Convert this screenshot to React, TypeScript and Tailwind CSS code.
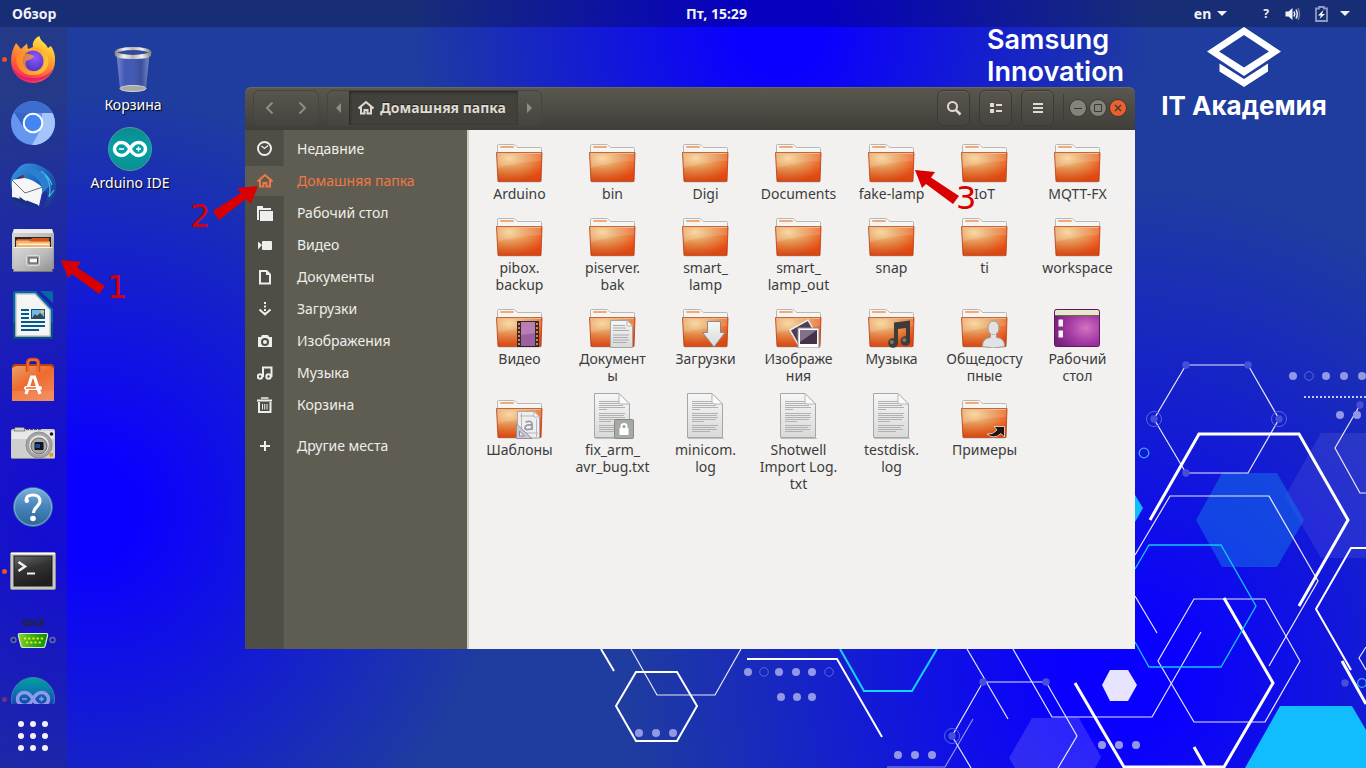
import type { ReactNode } from "react";

/* ---------- shared gradients ---------- */

function Stops({ colors }: { colors: string[] }) {
  return (
    <>
      {colors.map((color, i) => (
        <stop key={i} offset={i / (colors.length - 1)} stopColor={color} />
      ))}
    </>
  );
}

function SharedDefs() {
  return (
    <svg className="absolute size-0" aria-hidden="true">
      <defs>
        <radialGradient id="folder" cx="0.28" cy="0.2" r="0.85">
          <Stops colors={["#f8d294", "#eaa867", "#e9803f", "#f04e14"]} />
        </radialGradient>
        <linearGradient id="folderShade" x1="0" y1="0" x2="0" y2="1">
          <stop offset="0.4" stopColor="#c8501c" stopOpacity="0" />
          <stop offset="1" stopColor="#c43c0c" stopOpacity="0.5" />
        </linearGradient>
        <linearGradient id="paper" x1="0" y1="0" x2="0" y2="1">
          <Stops colors={["#f6f6f6", "#d9d9d9"]} />
        </linearGradient>
        <linearGradient id="steel" x1="0" y1="0" x2="1" y2="1">
          <Stops colors={["#d8d8d8", "#bdbdbd", "#8f8f8f"]} />
        </linearGradient>
        <radialGradient id="purple" cx="0.7" cy="0.5" r="0.75">
          <Stops colors={["#d273c0", "#a63ba5", "#742079"]} />
        </radialGradient>
        <linearGradient id="fire" x1="0.8" y1="0" x2="0.3" y2="1">
          <Stops colors={["#fff44f", "#ffb02e", "#ff6a35", "#f5205c"]} />
        </linearGradient>
        <linearGradient id="fireTail" x1="0" y1="0" x2="1" y2="0.6">
          <Stops colors={["#ff8a16", "#ffa02b", "#ffd53d"]} />
        </linearGradient>
        <radialGradient id="globe" cx="0.6" cy="0.35" r="0.7">
          <Stops colors={["#9059ff", "#6a45e0", "#4b2fb0"]} />
        </radialGradient>
        <linearGradient id="bird" x1="0" y1="0" x2="1" y2="1">
          <Stops colors={["#3a9be8", "#1c62b8", "#1d2d7c"]} />
        </linearGradient>
        <linearGradient id="bag" x1="0" y1="0" x2="0.7" y2="1">
          <Stops colors={["#e9a06a", "#ee6b2c", "#f0855a"]} />
        </linearGradient>
        <linearGradient id="help" x1="0" y1="0" x2="0" y2="1">
          <Stops colors={["#7fb0df", "#4583bb", "#2e6693"]} />
        </linearGradient>
        <linearGradient id="screen" x1="0" y1="0" x2="0.4" y2="1">
          <Stops colors={["#6a6a6a", "#333333", "#1f1f1f"]} />
        </linearGradient>
        <linearGradient id="serial" x1="0" y1="0" x2="1" y2="0">
          <Stops colors={["#86d52a", "#2fae17", "#0b8f05"]} />
        </linearGradient>
        <linearGradient id="teal" x1="0" y1="0" x2="0" y2="1">
          <Stops colors={["#0e8a8c", "#00a3a6", "#0e8d90"]} />
        </linearGradient>
        <linearGradient id="tealFade" x1="0" y1="0" x2="0" y2="1">
          <Stops colors={["#02a29c", "#0a76b0", "#183cb4", "#1a2ab8"]} />
        </linearGradient>
        <linearGradient id="binGlass" x1="0" y1="0" x2="1" y2="0">
          <Stops colors={["#7486cf", "#4259b4", "#455cb6", "#3a4f9c", "#7688c6"]} />
        </linearGradient>
        <linearGradient id="rim" x1="0" y1="0" x2="1" y2="0">
          <Stops colors={["#8b8b88", "#f2f2f0", "#b5b5b0", "#f4f4f2", "#858582"]} />
        </linearGradient>
      </defs>
    </svg>
  );
}

/* ---------- wallpaper ---------- */

const DOTS = [
  [1293, 376], [1326, 376], [1344, 376], [1362, 376], [1340, 415], [1357, 415],
  [1102, 745], [1119, 745], [1136, 745], [639, 733], [656, 733], [673, 733],
  [748, 672], [779, 672], [796, 672], [812, 672], [781, 697], [797, 697], [812, 697],
  [898, 755], [915, 755], [932, 755],
];

const FAINT_DOTS = [
  [1186, 365], [1248, 365], [1154, 419], [1279, 419], [1186, 473],
  [1360, 405], [1345, 683], [983, 682], [1046, 682], [952, 736],
];

function Wallpaper() {
  return (
    <svg
      className="absolute inset-0 h-full w-full"
      viewBox="0 0 1366 768"
      preserveAspectRatio="xMidYMid slice"
      aria-hidden="true"
    >
      <defs>
        {[
          { id: "glowLeft", cx: 90, cy: 510, r: 420 },
          { id: "glowTop", cx: 780, cy: 30, r: 370 },
          { id: "glowRight", cx: 1120, cy: 680, r: 500 },
        ].map(({ id, cx, cy, r }) => (
          <radialGradient key={id} id={id} gradientUnits="userSpaceOnUse" cx={cx} cy={cy} r={r}>
            <stop offset="0" stopColor="#0a00ff" />
            <stop offset="0.12" stopColor="#0a00ff" />
            <stop offset="1" stopColor="#0a00ff" stopOpacity="0" />
          </radialGradient>
        ))}
      </defs>
      <rect width="1366" height="768" fill="#1f3d9e" />
      <rect width="1366" height="768" fill="url(#glowLeft)" />
      <rect width="1366" height="768" fill="url(#glowTop)" />
      <rect width="1366" height="768" fill="url(#glowRight)" />

      <path d="M1321 433H1366V558H1321L1285 496Z" fill="#ffffff" opacity="0.08" />
      <path d="M1222 473H1277L1304 520L1277 567H1222L1196 520Z" fill="#1576e8" opacity="0.5" />
      <path d="M1032 718H1079L1101 757L1095 768H1015L1009 758Z" fill="#ffffff" opacity="0.14" />
      <path d="M1280 706H1352L1366 730V768H1245Z" fill="#12bdff" />
      <path d="M1120 495H1135L1143 508L1135 522H1120Z" fill="#12bdff" />
      <path d="M1110 670H1128L1137 685L1128 701H1110L1102 685Z" fill="#e6e4ff" />

      <g fill="none" stroke="#ffffff" strokeWidth="1.2" opacity="0.9">
        <path d="M1186 365H1248L1279 419L1248 473H1186L1154 419Z" />
        <path d="M1360 405L1335 448L1360 493H1366" />
        <path d="M1135 555L1170 496H1269L1318 581L1269 666" />
        <path d="M1194 599H1265L1300 661L1265 722H1194L1158 661Z" />
        <path d="M1135 596L1157 633" />
        <path d="M1201 632L1152 717H1052L1013 649" />
        <path d="M1366 647L1359 658L1366 670" />
        <path d="M631 649L657 695H715L741 649" />
        <path d="M971 768L952 736L983 682H1046L1077 736L1058 768" />
        <path d="M967 649L1008 719" />
        <path d="M973 719L945 767H887" opacity="0.6" />
      </g>
      <g fill="none" stroke="#ffffff" strokeWidth="2">
        <path d="M1366 548H1351L1316 609L1351 670" />
        <path d="M601 649L614 671" />
        <path d="M636 672H677L697 706L677 741H636L616 706Z" />
        <path d="M747 659H837L882 737" />
      </g>
      <g fill="none" stroke="#ffffff" strokeWidth="3">
        <path d="M1150 520L1199 434H1299L1348 520L1299 606" />
        <path d="M1224 598L1273 683L1224 767H1124L1075 683" />
        <path d="M1194 747L1206 768" />
        <path d="M1342 661L1366 704" />
      </g>
      <path d="M840 649L864 691H912L937 649" fill="none" stroke="#16d3ff" strokeWidth="2" />
      <path
        d="M1135 569L1149 545H1221L1256 606L1221 667H1149L1135 642"
        fill="none"
        stroke="#13c8f5"
        strokeWidth="1.3"
      />
      <path d="M1304 397H1366" stroke="#c6caf0" strokeWidth="2" strokeDasharray="2 2" />

      {DOTS.map(([x, y]) => (
        <circle key={`${x}-${y}`} cx={x} cy={y} r="4" fill="#9398e6" />
      ))}
      {FAINT_DOTS.map(([x, y]) => (
        <circle key={`${x}-${y}`} cx={x} cy={y} r="3.7" fill="#474fd8" />
      ))}
      <g fill="none" stroke="#5c63dc" strokeWidth="1">
        <circle cx="1154" cy="419" r="7.5" />
        <circle cx="1279" cy="419" r="7.5" />
        <circle cx="952" cy="736" r="7.5" />
        <circle cx="1309" cy="376" r="4.3" />
        <circle cx="764" cy="672" r="4.3" />
        <circle cx="829" cy="672" r="4.3" />
      </g>
      <g fill="none" stroke="#38a9f5" strokeWidth="1.3">
        <circle cx="1144" cy="453" r="4.8" />
        <circle cx="1362" cy="683" r="4.3" />
      </g>
    </svg>
  );
}

function Branding() {
  return (
    <div className="font-['Inter',sans-serif] text-white">
      <p className="absolute top-[24px] left-[987px] text-[27px] leading-8 font-semibold">
        Samsung
        <br />
        Innovation
      </p>
      <div className="absolute top-[27px] left-[1160px] flex w-[168px] flex-col items-center">
        <svg width="74" height="60" viewBox="0 0 74 60" fill="#ffffff" aria-hidden="true">
          <path
            fillRule="evenodd"
            d="M37 0L74 24.5L37 49L0 24.5ZM37 8L12 24.5L37 40.5L62 24.5Z"
          />
          <path d="M12.5 36.5L37 52L61 36.5V44.5L37 60L12.5 44.5Z" />
        </svg>
        <p className="mt-[3px] text-[26px] leading-8 font-bold whitespace-nowrap">IT Академия</p>
      </div>
    </div>
  );
}

/* ---------- launcher icons ---------- */

function FirefoxIcon() {
  return (
    <svg width="46" height="48" viewBox="0 0 46 48">
      <path
        d="M6 8L11 14L17 8.500L18 14L23 12C22 7 25 3 29.500 1C30 6 35 7 38 13L41 11C44 16 45.500 20 45 26A22 22 0 0 1 1 26C1 19 3 13 6 8Z"
        fill="url(#fire)"
      />
      <circle cx="23" cy="26" r="10.500" fill="url(#globe)" />
      <path
        d="M7 20C13 17 20 19 24 21C23 24 19 25 16 26C14 31 18 36 24 36C32 36 36 29 33 22C30 14 23 13 19 14C26 11 33 13 37 20C41 29 36 40 24 40C12 41 4 31 7 20Z"
        fill="url(#fireTail)"
        opacity="0.75"
      />
      <path
        d="M2 32C6 42 15 46 24 46C33 46 41 41 44 32C40 39 33 43 24 43C15 43 7 40 2 32Z"
        fill="#e2147a"
        opacity="0.75"
      />
    </svg>
  );
}

function ChromiumIcon() {
  return (
    <svg width="46" height="46" viewBox="0 0 46 46">
      <circle cx="23" cy="23" r="22" fill="#6496f0" />
      <path d="M4 12A22 22 0 0 1 42.500 13H23L13 24Z" fill="#3d6dcf" />
      <path d="M4 12L14 28L20 14Z" fill="#3564c4" />
      <path d="M42.500 13A22 22 0 0 1 22 45L32 27V13Z" fill="#a4c4fb" />
      <circle cx="23" cy="23" r="10.300" fill="#ffffff" />
      <circle cx="23" cy="23" r="8.300" fill="#4285f4" />
    </svg>
  );
}

function ThunderbirdIcon() {
  return (
    <svg width="48" height="48" viewBox="0 0 48 48">
      <path
        d="M13 2C20 -1 30 1 37 6C44 10 48 17 47 26C47 35 41 43 33 46C37 41 39 36 38 29L12 13C8 14 3 19 3 27C0 20 2 12 7 8C9 5 11 3 13 2Z"
        fill="url(#bird)"
      />
      <path d="M3 26C4 36 10 42 20 46C13 45 5 41 2 34Z" fill="#1b3a94" />
      <path d="M3 17L15 15C22 16 29 20 34 25L30 43L12 36L3 34Z" fill="#f6f6f8" />
      <path d="M3 17L16 30L34 24" fill="none" stroke="#6d7078" strokeWidth="1" />
      <path d="M13 12C17 9 22 10 26 14C31 18 34 23 33 31L41 22C39 12 29 4 19 5Z" fill="#2b7fd0" />
      <path d="M36 12C41 18 42 26 40 34L45 27M32 8C38 12 41 16 43 22" fill="none" stroke="#48b7ee" strokeWidth="1.200" />
      <circle cx="13.500" cy="13.500" r="1.700" fill="#7a3a24" />
      <path d="M4 35L8 39L6 35L13 40L12 36L20 42L19 39L29 43" fill="none" stroke="#183078" strokeWidth="2" />
    </svg>
  );
}

function FilesIcon() {
  return (
    <svg width="44" height="46" viewBox="0 0 44 46">
      <path d="M3 1H41L43 6V41H1V6Z" fill="url(#steel)" />
      <path d="M3 1H41L42 5H2Z" fill="#ebebeb" />
      <rect x="4" y="9" width="36" height="11" fill="#2d2723" />
      <path d="M6 11H20L21 10H38V20H6Z" fill="#d4541c" />
      <path d="M5 12.500H18L19 13.500H39V20H5Z" fill="#f4b26b" />
      <path d="M7 15.500H38V17H7Z" fill="#fff2dc" />
      <path d="M2.500 19H41.500V44H2.500Z" fill="url(#steel)" />
      <path d="M2.500 19.500H41.500" stroke="#f4f4f4" />
      <path d="M3 43.500H41" stroke="#777777" />
      <rect x="15.500" y="27.500" width="13" height="10" rx="1.500" fill="#aaaaaa" stroke="#dcdcdc" />
      <rect x="18" y="30" width="8.500" height="5" fill="#f5f5f5" stroke="#474747" />
    </svg>
  );
}

function WriterIcon() {
  return (
    <svg width="42" height="48" viewBox="0 0 42 48">
      <path d="M3 0H24L41 18V46Q41 48 39 48H3Q1 48 1 46V2Q1 0 3 0Z" fill="#0369a3" />
      <path d="M1 32H41V46Q41 48 39 48H3Q1 48 1 46Z" fill="#054f7c" />
      <path d="M28 0H39Q41 0 41 2V12Z" fill="#0369a3" />
      <path d="M4 3H23L38 19V45H4Z" fill="#f5f5f5" stroke="#c8c8c8" strokeWidth="1.500" />
      <path d="M9 19H17M9 23H17M9 27H17M9 31H33M9 35H33M9 39H27" stroke="#055a8c" strokeWidth="2" />
      <rect x="19.500" y="18.500" width="13" height="9" fill="#70b9e6" stroke="#0a5482" />
      <path d="M20 27L23 23L25 25L28 22L32 26V27Z" fill="#3d4347" />
      <circle cx="30.500" cy="20.500" r="1.700" fill="#e8c542" />
    </svg>
  );
}

function SoftwareIcon() {
  return (
    <svg width="44" height="46" viewBox="0 0 44 46">
      <path d="M1 10L3 8H41L43 10V16H1Z" fill="#b9420f" />
      <path d="M1 12L5 10H39L43 12V45H1Z" fill="url(#bag)" />
      <path d="M1 35H43V45H1Z" fill="#f59a6f" opacity="0.35" />
      <path d="M16.500 16V8Q16.500 3.500 20 3.500H24Q27.500 3.500 27.500 8V16" fill="none" stroke="#d6491b" strokeWidth="3.500" />
      <path d="M17 16V8Q17 4 20 4H24Q27 4 27 8V16" fill="none" stroke="#f2743d" strokeWidth="1.500" />
      <path d="M15 38L20.500 21H23.500L29 38" fill="none" stroke="#ffffff" strokeWidth="3.200" />
      <rect x="13" y="30" width="18" height="4" rx="2" fill="#ffffff" />
      <path d="M15 32H25" stroke="#ee6a2b" strokeWidth="1.500" />
    </svg>
  );
}

function CameraIcon() {
  return (
    <svg width="44" height="34" viewBox="0 0 44 34">
      <path d="M2 3H42Q44 3 44 5V31Q44 33 42 33H2Q0 33 0 31V5Q0 3 2 3Z" fill="#cfcfcf" />
      <path d="M1 5H43V13H1Z" fill="#e8e8e8" />
      <path d="M4 1.500H13L14 5H3Z" fill="#d2d2d2" stroke="#666666" strokeWidth="0.700" />
      <path d="M15 3.500H31" stroke="#5c5c5c" strokeWidth="1" strokeDasharray="3 1" />
      <circle cx="28" cy="19" r="13" fill="#a7a7a7" stroke="#8d8d8d" />
      <circle cx="28" cy="19" r="10.500" fill="#e0e0e0" stroke="#999999" />
      <circle cx="28" cy="20" r="8" fill="#a6a6a6" stroke="#6c6c6c" />
      <rect x="23.500" y="16" width="9" height="8" rx="1" fill="#0c1424" />
      <path d="M24.500 18H29V22H24.500Z" fill="#1d4f8e" />
      <circle cx="40.500" cy="8" r="1.800" fill="#1c1c1c" />
      <rect x="38.500" y="27" width="3.500" height="3.500" fill="#e59a1c" />
      <path d="M1 32.500H43" stroke="#888888" />
    </svg>
  );
}

function HelpIcon() {
  return (
    <svg width="42" height="42" viewBox="0 0 42 42">
      <circle cx="21" cy="21" r="19.500" fill="url(#help)" stroke="#2d6c9d" strokeWidth="1" />
      <circle cx="21" cy="21" r="18.500" fill="none" stroke="#8fc0e8" strokeWidth="0.800" />
      <path
        d="M14 14.500C14 10.500 17 9 21 9C25.500 9 28 11.500 28 15C28 20.500 22 20.500 21.500 27"
        fill="none"
        stroke="#ffffff"
        strokeWidth="3.200"
      />
      <circle cx="14.800" cy="14.800" r="2.200" fill="#ffffff" />
      <circle cx="21" cy="32.500" r="2.800" fill="#ffffff" />
    </svg>
  );
}

function TerminalIcon() {
  return (
    <svg width="46" height="38" viewBox="0 0 46 38">
      <rect x="0.500" y="0.500" width="45" height="37" rx="1.500" fill="#c9c9c9" stroke="#8f8f8f" />
      <path d="M1 1.500H45" stroke="#ffffff" strokeWidth="1.500" />
      <rect x="4" y="4" width="38" height="30" fill="url(#screen)" stroke="#1b1b1b" />
      <path d="M8.500 10L15 14.500L8.500 19" fill="none" stroke="#f2f2f2" strokeWidth="2.500" />
      <path d="M17 21.500H25" stroke="#f2f2f2" strokeWidth="2" />
    </svg>
  );
}

function SerialIcon() {
  return (
    <svg width="46" height="40" viewBox="0 0 46 40">
      <g fill="none" stroke="#23262f" strokeWidth="1.300">
        <path d="M12.500 4.500V11M21.500 4.500V11M24 4.500V11M33 4.500V11" />
        <circle cx="17" cy="7.700" r="2.800" />
        <circle cx="28.500" cy="7.700" r="2.800" />
      </g>
      <circle cx="3.500" cy="25" r="2.500" fill="none" stroke="#6b6e88" strokeWidth="1.400" />
      <circle cx="42.500" cy="25" r="2.500" fill="none" stroke="#6b6e88" strokeWidth="1.400" />
      <path d="M9 18.500H37Q38 19 37.500 21L35 31Q34.500 32.500 33 32.500H13Q11.500 32.500 11 31L8.500 21Q8 19 9 18.500Z" fill="url(#serial)" stroke="#d8e8d0" strokeWidth="1.200" />
      <path d="M14 23.500H33" stroke="#ffe11c" strokeWidth="2.200" strokeDasharray="2.200 2" />
      <path d="M16 27.500H31" stroke="#ffe11c" strokeWidth="2.200" strokeDasharray="2.200 2" />
    </svg>
  );
}

function ArduinoIcon({ faded = false }: { faded?: boolean }) {
  return (
    <svg width="46" height="46" viewBox="0 0 46 46">
      <circle
        cx="23"
        cy="23"
        r="21.500"
        fill={faded ? "url(#tealFade)" : "url(#teal)"}
        stroke={faded ? "#3e7fb5" : "#4f9a9c"}
        strokeWidth="1"
      />
      <g fill="none" stroke={faded ? "#8f9ae8" : "#ffffff"}>
        <path
          d="M23 23C20.500 18.500 18 16.500 14.500 16.500C10.500 16.500 7.500 19.500 7.500 23C7.500 26.500 10.500 29.500 14.500 29.500C18 29.500 20.500 27.500 23 23C25.500 18.500 28 16.500 31.500 16.500C35.500 16.500 38.500 19.500 38.500 23C38.500 26.500 35.500 29.500 31.500 29.500C28 29.500 25.500 27.500 23 23Z"
          strokeWidth="3.500"
        />
        <path d="M12 23H17M29 23H34M31.500 20.500V25.500" strokeWidth="1.500" />
      </g>
    </svg>
  );
}

function TrashBinIcon() {
  return (
    <svg width="40" height="48" viewBox="0 0 40 48">
      <path d="M3.500 8L7 43Q20 49 33 43L36.500 8Z" fill="url(#binGlass)" />
      <ellipse cx="20" cy="42.500" rx="13" ry="3" fill="#a9a9a5" stroke="#d4d4d0" />
      <ellipse cx="20" cy="6.500" rx="17" ry="4" fill="#34499a" stroke="url(#rim)" strokeWidth="3" />
      <path d="M2 7Q4 10.500 20 10.500Q36 10.500 38 7V9.500Q36 13 20 13Q4 13 2 9.500Z" fill="url(#rim)" />
    </svg>
  );
}

/* ---------- file icons ---------- */

function FolderIcon({ children }: { children?: ReactNode }) {
  return (
    <svg width="47" height="48" viewBox="0 0 47 48">
      <path
        d="M1.500 19V10.500Q1.500 9.500 2.500 9.500H17.500Q18.500 9.500 19.500 10.500L21.500 12.500H44.500Q45.500 12.500 45.500 13.500V19Z"
        fill="#f5f5f4"
        stroke="#b9b7b3"
      />
      <path d="M5 12H17" stroke="#f2a877" strokeWidth="2" strokeLinecap="round" />
      <path d="M3 47H44" stroke="#000000" opacity="0.18" />
      <path d="M0.500 17.500H46L45 46H2Z" fill="url(#folder)" />
      <path d="M0.500 17.500H46L45 46H2Z" fill="url(#folderShade)" />
      <path d="M1 18H45.500L45 26Q22 27 1.500 33Z" fill="#ffffff" opacity="0.14" />
      <path d="M0.500 17.500H46" stroke="#bf6a3a" />
      <path d="M1.500 18.500H45" stroke="#f3b78a" />
      <path d="M0.500 17.500L2 46.500H45L46 17.500" fill="none" stroke="#b4380f" strokeWidth="0.800" />
      {children}
    </svg>
  );
}

function TextFileIcon({ children }: { children?: ReactNode }) {
  return (
    <svg width="47" height="48" viewBox="0 0 47 48">
      <path d="M6 47.500H42" stroke="#000000" opacity="0.2" />
      <path d="M5.500 2.500H30L40.500 13V46.500H5.500Z" fill="url(#paper)" stroke="#a6a6a6" />
      <path
        d="M10 10.500H35M10 12.500H36M10 14.500H34M10 16.500H36M10 18.500H18M10 22.500H36M10 24.500H35M10 26.500H36M10 28.500H34M10 30.500H22M10 34.500H36M10 36.500H33M10 38.500H35M10 40.500H28"
        stroke="#b1b1b1"
      />
      <path d="M30 2.500V11Q30 13 32 13H40.500Z" fill="#fbfbfb" stroke="#b5b5b5" />
      {children}
    </svg>
  );
}

function DesktopIcon() {
  return (
    <svg width="47" height="48" viewBox="0 0 47 48">
      <rect x="0.500" y="9.500" width="45" height="37" rx="2" fill="url(#purple)" stroke="#5d1a60" />
      <path d="M1 15V11.500Q1 10 2.500 10H43.500Q45 10 45 11.500V15Z" fill="#e9e7d2" />
      <path d="M1 15.500H45" stroke="#6a6f35" />
      <path d="M4.500 19.500H9V26.500H4.500ZM4.500 30.500H9V37.500H4.500Z" fill="#f6f3f6" />
    </svg>
  );
}

function VideoEmblem() {
  return (
    <g>
      <rect x="21" y="21" width="22" height="26" fill="#2e2a2c" />
      <rect x="25" y="22" width="14" height="24" fill="#9d5f9d" />
      <path d="M25 22H39V33L25 35Z" fill="#c58dbd" opacity="0.7" />
      <path d="M23 23V46M41 23V46" stroke="#e5813f" strokeWidth="2" strokeDasharray="2 2" />
    </g>
  );
}

function DocumentEmblem() {
  return (
    <g>
      <path d="M21.500 20.500H38L43.500 26V47.500H21.500Z" fill="url(#paper)" stroke="#a3a3a3" />
      <path d="M24 25.500H36M24 28H37M24 30.500H40M24 35H40M24 37.500H39M24 40H40M24 42.500H38" stroke="#acacac" />
      <path d="M38 20.500V26H43.500Z" fill="#ffffff" stroke="#b3b3b3" />
    </g>
  );
}

function DownloadEmblem() {
  return (
    <path
      d="M25.500 21.500H38.500V32.500H43L32 47L20.500 32.500H25.500Z"
      fill="url(#paper)"
      stroke="#8a8a8a"
    />
  );
}

function PicturesEmblem() {
  return (
    <g>
      <path d="M15 30L33 20L42 36L24 46Z" fill="#4e3f56" stroke="#ececec" strokeWidth="1.500" />
      <rect x="23" y="28" width="21" height="20" fill="#ffffff" stroke="#8b8b8b" />
      <rect x="25" y="30" width="17" height="14" fill="#443348" />
      <path d="M25 30H42L25 42Z" fill="#85708a" />
    </g>
  );
}

function MusicEmblem() {
  return (
    <g fill="#3d3c3b">
      <path d="M26 22.500L42 20.500V42H38V28L30 29V44H26Z" />
      <circle cx="25" cy="43" r="4.800" />
      <circle cx="37.500" cy="41" r="4.800" />
      <circle cx="23.800" cy="42" r="2" fill="#777777" />
      <circle cx="36.300" cy="40" r="2" fill="#777777" />
    </g>
  );
}

function PublicEmblem() {
  return (
    <g fill="#e2e2e2" stroke="#9d9d9d">
      <path d="M29.500 35H35.500V37.500Q43 38 43.500 45V46.500Q32 49.500 21.500 46.500V45Q22 38 29.500 37.500Z" />
      <ellipse cx="32.500" cy="28" rx="5.500" ry="7" />
      <path d="M30 34Q32.500 36 35 34V39H30Z" stroke="none" />
    </g>
  );
}

function TemplateEmblem() {
  return (
    <g>
      <path d="M21.500 20.500H38L43.500 26V47H21.500Z" fill="#eeeeef" stroke="#a9a9ad" />
      <path d="M24 25H42M24 42H42M25.500 22V46M40.500 28V46" stroke="#b7b7bd" />
      <path
        d="M29.500 31Q36 29 36 33V39M36 34Q29 33 29 37Q29.500 40 36 37.500"
        fill="none"
        stroke="#9898a6"
        strokeWidth="1.800"
      />
      <path d="M20.500 33L36 47.500H20.500Z" fill="#c9c9d4" stroke="#9191a0" />
      <path d="M23.500 40L28.500 45H23.500Z" fill="#eeeeef" stroke="#8686a0" />
      <path d="M38 20.500V26H43.500Z" fill="#ffffff" stroke="#b3b3b3" />
    </g>
  );
}

function LockEmblem() {
  return (
    <g>
      <rect x="25.500" y="28.500" width="19" height="19" rx="1" fill="#a5aaa2" stroke="#868a83" />
      <path d="M32.500 38V35Q32.500 33 35 33Q37.500 33 37.500 35V38" fill="none" stroke="#ffffff" strokeWidth="2" />
      <rect x="30.500" y="37" width="9" height="7" rx="0.500" fill="#ffffff" />
    </g>
  );
}

function LinkEmblem() {
  return (
    <path
      d="M33 35.500H43.500V46L40 42.500Q33 49 26 43Q32 44 36 39Z"
      fill="#1d1512"
      stroke="#f7e7df"
      strokeWidth="0.800"
    />
  );
}

interface FileEntry {
  name: string;
  icon?: ReactNode;
}

// line breaks in names are where the file manager wraps them
const FILES: FileEntry[] = [
  { name: "Arduino" },
  { name: "bin" },
  { name: "Digi" },
  { name: "Documents" },
  { name: "fake-lamp" },
  { name: "IoT" },
  { name: "MQTT-FX" },
  { name: "pibox.\nbackup" },
  { name: "piserver.\nbak" },
  { name: "smart_\nlamp" },
  { name: "smart_\nlamp_out" },
  { name: "snap" },
  { name: "ti" },
  { name: "workspace" },
  { name: "Видео", icon: <FolderIcon><VideoEmblem /></FolderIcon> },
  { name: "Документ\nы", icon: <FolderIcon><DocumentEmblem /></FolderIcon> },
  { name: "Загрузки", icon: <FolderIcon><DownloadEmblem /></FolderIcon> },
  { name: "Изображе\nния", icon: <FolderIcon><PicturesEmblem /></FolderIcon> },
  { name: "Музыка", icon: <FolderIcon><MusicEmblem /></FolderIcon> },
  { name: "Общедосту\nпные", icon: <FolderIcon><PublicEmblem /></FolderIcon> },
  { name: "Рабочий\nстол", icon: <DesktopIcon /> },
  { name: "Шаблоны", icon: <FolderIcon><TemplateEmblem /></FolderIcon> },
  { name: "fix_arm_\navr_bug.txt", icon: <TextFileIcon><LockEmblem /></TextFileIcon> },
  { name: "minicom.\nlog", icon: <TextFileIcon /> },
  { name: "Shotwell\nImport Log.\ntxt", icon: <TextFileIcon /> },
  { name: "testdisk.\nlog", icon: <TextFileIcon /> },
  { name: "Примеры", icon: <FolderIcon><LinkEmblem /></FolderIcon> },
];

/* ---------- sidebar ---------- */

function Glyph({ children }: { children: ReactNode }) {
  return (
    <svg
      width="16"
      height="16"
      viewBox="0 0 16 16"
      fill="none"
      stroke="currentColor"
      strokeWidth="2"
      className="shrink-0"
      aria-hidden="true"
    >
      {children}
    </svg>
  );
}

function HomeGlyph() {
  return (
    <Glyph>
      <path d="M0.500 8.500L8 2L15.500 8.500" />
      <path d="M3 7V13.500H6.500V10H9.500V13.500H13V7" />
    </Glyph>
  );
}

interface Place {
  label: string;
  glyph: ReactNode;
  active?: boolean;
}

const PLACES: Place[] = [
  {
    label: "Недавние",
    glyph: (
      <Glyph>
        <circle cx="7.500" cy="7.500" r="6.500" />
        <path d="M4.500 5L7.500 7.500L11 4.500" strokeWidth="1.300" />
      </Glyph>
    ),
  },
  { label: "Домашняя папка", glyph: <HomeGlyph />, active: true },
  {
    label: "Рабочий стол",
    glyph: (
      <Glyph>
        <path d="M0 1H6V3H14V5H2V15H0Z" fill="currentColor" stroke="none" />
        <path d="M3 6H16V16H3Z" fill="currentColor" stroke="none" />
      </Glyph>
    ),
  },
  {
    label: "Видео",
    glyph: (
      <Glyph>
        <path d="M1 4.500L5 8L1 12.500Z" fill="currentColor" stroke="none" />
        <rect x="5" y="4" width="10" height="9" rx="1" fill="currentColor" stroke="none" />
      </Glyph>
    ),
  },
  {
    label: "Документы",
    glyph: (
      <Glyph>
        <path d="M3 2H9.500L13 5.500V14.500H3Z" />
        <path d="M9 2V6H13Z" fill="currentColor" stroke="none" />
      </Glyph>
    ),
  },
  {
    label: "Загрузки",
    glyph: (
      <Glyph>
        <path d="M8 1V13" strokeDasharray="2 1.500" />
        <path d="M2.500 8.500L8 13.500L13.500 8.500" />
      </Glyph>
    ),
  },
  {
    label: "Изображения",
    glyph: (
      <Glyph>
        <path
          fillRule="evenodd"
          d="M5 2H11L12 4H15V14H1V4H4ZM8 5A4 4 0 1 0 8 13A4 4 0 1 0 8 5Z"
          fill="currentColor"
          stroke="none"
        />
        <circle cx="8" cy="9" r="2" fill="currentColor" stroke="none" />
      </Glyph>
    ),
  },
  {
    label: "Музыка",
    glyph: (
      <Glyph>
        <circle cx="3" cy="11.500" r="2.200" />
        <circle cx="11.500" cy="11.500" r="2.200" />
        <path d="M6 12V2.500H14.500V12" />
      </Glyph>
    ),
  },
  {
    label: "Корзина",
    glyph: (
      <Glyph>
        <path d="M0 3.500H15" />
        <path d="M4 1H11.500" strokeWidth="1.500" />
        <path d="M2 5V15H13.500V5" />
        <path d="M5.500 7V12.500M7.700 7V12.500M10 7V12.500" strokeWidth="1" />
      </Glyph>
    ),
  },
];

function PlaceRow({ label, glyph, active = false }: Place) {
  return (
    <a
      href="#"
      aria-current={active ? "page" : undefined}
      className={`flex h-8 items-center ${active ? "text-[#f07746]" : "text-[#eeeeec]"}`}
    >
      <span
        className={`flex h-[30px] w-[39px] items-center pl-3 ${active ? "bg-[#5f5d51]" : ""}`}
      >
        {glyph}
      </span>
      <span className="pl-[13px]">{label}</span>
    </a>
  );
}

function Sidebar() {
  return (
    <nav className="w-[222px] shrink-0 bg-linear-to-r from-[#4f4e46] from-[38px] via-[#46453e] via-[38px] to-[#5f5d51] to-[39px] pt-[3px]">
      {PLACES.map((place) => (
        <PlaceRow key={place.label} {...place} />
      ))}
      <div className="mt-[9px]">
        <PlaceRow
          label="Другие места"
          glyph={
            <Glyph>
              <path d="M8 3V13M3 8H13" />
            </Glyph>
          }
        />
      </div>
    </nav>
  );
}

/* ---------- file manager window ---------- */

function HeaderButton({ label, children }: { label: string; children: ReactNode }) {
  return (
    <button
      aria-label={label}
      className="flex h-9 w-[33px] items-center justify-center rounded-md border border-[#3b3a35] bg-linear-to-b from-[#57554d] to-[#46443f] text-[#dfdbd2] shadow-[inset_0_1px_0_#66645b]"
    >
      {children}
    </button>
  );
}

function HeaderBar() {
  return (
    <header className="flex h-[43px] items-center rounded-t-md bg-linear-to-b from-[#5b584f] to-[#403e39] pr-[9px] pb-px pl-2 shadow-[inset_0_1px_0_#6a675d]">
      <div className="flex h-9 w-[66px] rounded-md border border-[#46443e] bg-linear-to-b from-[#57554d] to-[#46443f] text-[#8f8c83]">
        <button aria-label="Назад" className="flex flex-1 items-center justify-center">
          <Glyph>
            <path d="M10.500 2.500L5 8L10.500 13.500" />
          </Glyph>
        </button>
        <button aria-label="Вперёд" className="flex flex-1 items-center justify-center">
          <Glyph>
            <path d="M5.500 2.500L11 8L5.500 13.500" />
          </Glyph>
        </button>
      </div>

      <div className="ml-2 flex h-9 items-stretch rounded-md border border-[#46443e] bg-linear-to-b from-[#57554d] to-[#46443f] text-[#8f8c83]">
        <button aria-label="Прокрутить влево" className="flex w-[21px] items-center justify-center">
          <svg width="5" height="10" viewBox="0 0 5 10" fill="currentColor">
            <path d="M5 0V10L0 5Z" />
          </svg>
        </button>
        <button className="flex w-[169px] items-center gap-1.5 bg-[#42413b] pl-[9px] font-bold text-[#dfdbd2] shadow-[inset_1px_1px_3px_#25241f] [text-shadow:0_-1px_0_#22211d]">
          <HomeGlyph />
          <span className="whitespace-nowrap">Домашняя папка</span>
        </button>
        <button aria-label="Прокрутить вправо" className="flex w-[23px] items-center justify-center">
          <svg width="5" height="10" viewBox="0 0 5 10" fill="currentColor">
            <path d="M0 0V10L5 5Z" />
          </svg>
        </button>
      </div>

      <div className="ml-auto flex items-center gap-[9px]">
        <HeaderButton label="Поиск">
          <Glyph>
            <circle cx="6.500" cy="6.500" r="4.500" />
            <path d="M9.800 9.800L14.500 14.500" strokeWidth="2.500" />
          </Glyph>
        </HeaderButton>
        <HeaderButton label="Вид">
          <Glyph>
            <path d="M2 3H6V7H2ZM2 9H6V13H2ZM8 4H14V6H8ZM8 10H14V12H8Z" fill="currentColor" stroke="none" />
          </Glyph>
        </HeaderButton>
        <HeaderButton label="Меню">
          <Glyph>
            <path d="M3 4H13M3 8H13M3 12H13" />
          </Glyph>
        </HeaderButton>
      </div>
      <div className="mr-1.5 ml-[9px] h-7 w-px bg-[#3f3e38]" />
      <div className="flex items-center gap-1 text-[#3a3934]">
        <button aria-label="Свернуть" className="size-4 rounded-full bg-[#85827a] shadow-[0_0_0_1px_#3a3934]">
          <Glyph>
            <path d="M4 8.500H12" strokeWidth="1" />
          </Glyph>
        </button>
        <button aria-label="Развернуть" className="size-4 rounded-full bg-[#85827a] shadow-[0_0_0_1px_#3a3934]">
          <Glyph>
            <path d="M4.500 4.500H11.500V11.500H4.500Z" strokeWidth="1" />
          </Glyph>
        </button>
        <button aria-label="Закрыть" className="size-4 rounded-full bg-[#ec5f2f] shadow-[0_0_0_1px_#3a3934]">
          <Glyph>
            <path d="M5 5L11 11M11 5L5 11" strokeWidth="1.300" />
          </Glyph>
        </button>
      </div>
    </header>
  );
}

function FileManager() {
  return (
    <section className="absolute top-[87px] left-[245px] flex h-[562px] w-[890px] flex-col">
      <HeaderBar />
      <div className="flex min-h-0 flex-1">
        <Sidebar />
        <ul className="grid flex-1 auto-rows-min grid-cols-[repeat(7,93px)] border-l-2 border-[#cfccc7] bg-[#f2f1ef] pt-[5px] pl-1 text-[#3c3c3c]">
          {FILES.map(({ name, icon }) => (
            <li key={name} className="pb-[7px]">
              <button className="flex w-full flex-col items-center gap-0.5">
                {icon ?? <FolderIcon />}
                <span className="leading-[17px] whitespace-pre">{name}</span>
              </button>
            </li>
          ))}
        </ul>
      </div>
    </section>
  );
}

/* ---------- desktop shell ---------- */

function CaretDown() {
  return (
    <svg width="10" height="5" viewBox="0 0 10 5" fill="currentColor" aria-hidden="true">
      <path d="M0 0H10L5 5Z" />
    </svg>
  );
}

function TopBar() {
  return (
    <header className="relative flex h-[27px] shrink-0 items-center bg-black/25 font-bold text-[#f2f2f2]">
      <button className="w-[67px] shrink-0 pl-3 text-left">Обзор</button>
      <div className="grid flex-1 grid-cols-[1fr_auto_1fr] items-center">
        <button className="col-start-2 whitespace-nowrap">Пт, 15:29</button>
        <div className="flex items-center justify-end pr-4">
          <button className="flex items-center gap-1.5">
            en <CaretDown />
          </button>
          <button aria-label="Системное меню" className="ml-9 flex items-center">
            <span className="text-xs">?</span>
            <svg className="ml-4" width="16" height="14" viewBox="0 0 16 14" fill="none" stroke="currentColor" strokeWidth="1.500">
              <path d="M0.500 4.500H3.500L7.500 1V13L3.500 9.500H0.500Z" fill="currentColor" stroke="none" />
              <path d="M9 4.500Q10.500 7 9 9.500M11 2.500Q13.500 7 11 11.500" />
              <path d="M13 1Q16 7 13 13" opacity="0.4" />
            </svg>
            <svg className="ml-3.5" width="13" height="16" viewBox="0 0 13 16">
              <path d="M4 1H9V2.500H12V15H1V2.500H4Z" fill="none" stroke="#8f9bc4" strokeWidth="1.800" />
              <path d="M8.500 4L3 9.500H6L4.500 13L10 8H7Z" fill="#ffffff" />
            </svg>
            <span className="ml-3">
              <CaretDown />
            </span>
          </button>
        </div>
      </div>
    </header>
  );
}

const DOCK = [
  { name: "Firefox", icon: <FirefoxIcon />, running: true },
  { name: "Chromium", icon: <ChromiumIcon /> },
  { name: "Thunderbird", icon: <ThunderbirdIcon /> },
  { name: "Файлы", icon: <FilesIcon /> },
  { name: "LibreOffice Writer", icon: <WriterIcon /> },
  { name: "Ubuntu Software", icon: <SoftwareIcon /> },
  { name: "Shotwell", icon: <CameraIcon /> },
  { name: "Справка", icon: <HelpIcon /> },
  { name: "Терминал", icon: <TerminalIcon />, running: true },
  { name: "Последовательный порт", icon: <SerialIcon /> },
  { name: "Arduino IDE", icon: <ArduinoIcon faded />, running: true, fading: true },
];

function Dock() {
  return (
    <nav className="relative flex w-[67px] shrink-0 flex-col bg-[#33334d]/25 pr-px">
      <div className="min-h-0 flex-1 overflow-hidden">
        {DOCK.map(({ name, icon, running, fading }) => (
          <button
            key={name}
            aria-label={name}
            className="relative flex h-16 w-full items-center justify-center"
          >
            {running && (
              <span
                className={`absolute left-0.5 size-[5px] rounded-full bg-[#e95420] ${fading ? "opacity-40" : ""}`}
              />
            )}
            {icon}
          </button>
        ))}
      </div>
      <button aria-label="Показать приложения" className="flex h-16 items-center justify-center">
        <svg width="30" height="30" viewBox="0 0 30 30" fill="#f2f2f2">
          {[3, 15, 27].map((y) => [3, 15, 27].map((x) => <circle key={`${x}-${y}`} cx={x} cy={y} r="3" />))}
        </svg>
      </button>
    </nav>
  );
}

function DesktopShortcuts() {
  return (
    <div className="text-white [text-shadow:1px_1px_1px_#000]">
      <a href="#" className="absolute top-[46px] left-[98px] flex w-[70px] flex-col items-center gap-px whitespace-nowrap">
        <TrashBinIcon />
        Корзина
      </a>
      <a href="#" className="absolute top-[126px] left-[84px] flex w-[92px] flex-col items-center gap-px whitespace-nowrap">
        <ArduinoIcon />
        Arduino IDE
      </a>
    </div>
  );
}

/** Red callouts showing the order of clicks */
function Callouts() {
  return (
    <div className="pointer-events-none font-['DejaVu_Sans',sans-serif] text-[32px] leading-8 text-[#d80000]">
      <svg className="absolute top-[260px] left-[61px]" width="45" height="35" viewBox="0 0 45 35" fill="currentColor">
        <path d="M0 0L20 2L16 7.500L44 26L38 34L11 14L7 18Z" />
      </svg>
      <span className="absolute top-[271px] left-[107px]">1</span>
      <svg className="absolute top-[186px] left-[213px]" width="45" height="35" viewBox="0 0 45 35" fill="currentColor">
        <path d="M45 0L38 18L33 13L6 34L0 25L28 7L24 2Z" />
      </svg>
      <span className="absolute top-[200px] left-[190px]">2</span>
      <svg className="absolute top-[170px] left-[915px]" width="45" height="35" viewBox="0 0 45 35" fill="currentColor">
        <path d="M0 0L20 2L16 7.500L44 26L38 34L11 14L7 18Z" />
      </svg>
      <span className="absolute top-[182px] left-[956px]">3</span>
    </div>
  );
}

export default function App() {
  return (
    <div className="relative flex h-screen flex-col overflow-hidden bg-[#1f3d9e] font-['Noto_Sans',sans-serif] text-sm">
      <SharedDefs />
      <Wallpaper />
      <Branding />
      <TopBar />
      <div className="flex min-h-0 flex-1">
        <Dock />
        <main className="flex-1">
          <DesktopShortcuts />
          <FileManager />
          <Callouts />
        </main>
      </div>
    </div>
  );
}
